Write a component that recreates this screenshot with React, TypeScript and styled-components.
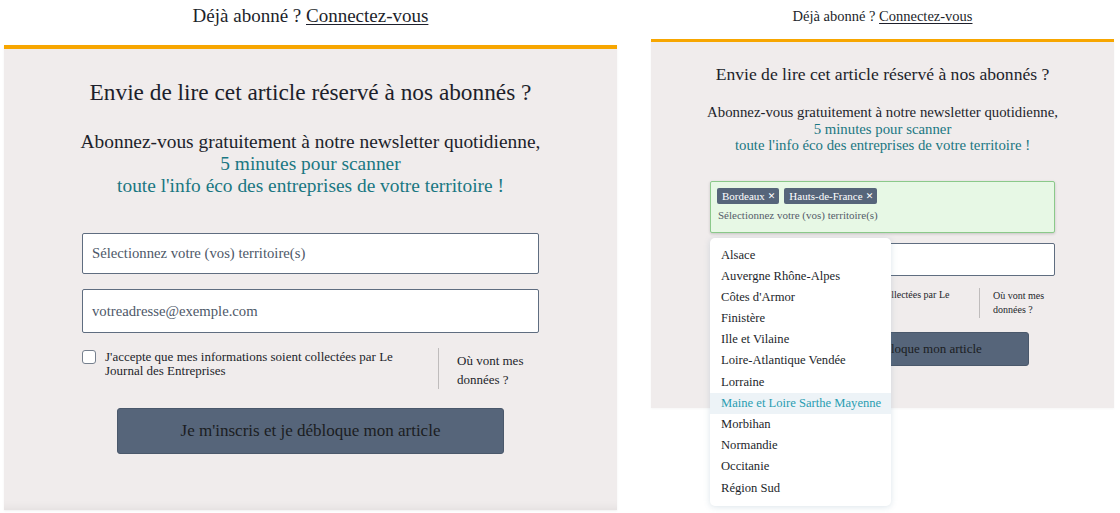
import React from "react";
import styled, { createGlobalStyle, css } from "styled-components";

const Global = createGlobalStyle`
  html, body { margin: 0; padding: 0; background: #ffffff; }
  body { font-family: "Liberation Serif", "DejaVu Serif", serif; color: #1d1f2b; }
  * { box-sizing: border-box; }
`;

type Size = "lg" | "sm";

const S = {
  lg: {
    loginFont: 19, loginH: 45, border: 4, panelW: 613, panelML: 4,
    padTop: 29, padBottom: 56, headFont: 23.3, headLH: 28, headGap: 25,
    subFont: 19.4, subLH: 22, formGap: 36, formW: 457,
    in1H: 41, in2H: 44, inGap: 15, inFont: 14.7, inPad: 9,
    consentGap: 15, consentH: 41, consentFont: 13, consentLH: 14, boxSize: 14,
    textW: 300, divPad: 18, rightW: 82, rightLH: 19,
    btnGap: 19, btnW: 387, btnH: 46, btnFont: 17,
  },
  sm: {
    loginFont: 14.5, loginH: 39, border: 3, panelW: 463, panelML: 0,
    padTop: 22, padBottom: 42, headFont: 17.6, headLH: 21, headGap: 19,
    subFont: 14.8, subLH: 16.5, formGap: 27, formW: 345,
    in1H: 52, in2H: 33, inGap: 10, inFont: 11, inPad: 7,
    consentGap: 12, consentH: 30, consentFont: 10, consentLH: 11, boxSize: 11,
    textW: 230, divPad: 13, rightW: 62, rightLH: 14,
    btnGap: 14, btnW: 293, btnH: 34, btnFont: 13,
  },
};

const Page = styled.div`
  display: grid;
  grid-template-columns: 620px 463px;
  column-gap: 31px;
  width: 1120px;
  height: 513px;
  overflow: hidden;
`;

const Column = styled.div<{ $s: Size }>`
  display: flex;
  flex-direction: column;
  align-items: flex-start;
`;

const Login = styled.div<{ $s: Size }>`
  ${({ $s }) => css`
    width: ${S[$s].panelW + S[$s].panelML}px;
    padding-left: ${S[$s].panelML}px;
    height: ${S[$s].loginH}px;
    font-size: ${S[$s].loginFont}px;
  `}
  display: flex;
  align-items: flex-start;
  justify-content: center;
  padding-top: ${({ $s }) => ($s === "lg" ? 5 : 8)}px;
  color: #1d1f2b;
  a { color: #1d1f2b; text-decoration: underline; text-underline-offset: 2px; }
`;

const Panel = styled.section<{ $s: Size }>`
  ${({ $s }) => css`
    width: ${S[$s].panelW}px;
    margin-left: ${S[$s].panelML}px;
    border-top: ${S[$s].border}px solid #f7a600;
    padding: ${S[$s].padTop}px 0 ${S[$s].padBottom}px;
  `}
  background: #f0ecec;
  box-shadow: ${({ $s }) =>
    $s === "lg" ? "inset 0 -10px 10px -8px rgba(0,0,0,0.06), 0 1px 2px rgba(0,0,0,0.06)" : "0 1px 2px rgba(0,0,0,0.04)"};
  display: flex;
  flex-direction: column;
  align-items: center;
`;

const Heading = styled.h2<{ $s: Size }>`
  margin: 0;
  font-weight: 400;
  text-align: center;
  white-space: nowrap;
  ${({ $s }) => css`
    font-size: ${S[$s].headFont}px;
    line-height: ${S[$s].headLH}px;
  `}
`;

const Sub = styled.p<{ $s: Size }>`
  margin: ${({ $s }) => S[$s].headGap}px 0 0;
  text-align: center;
  white-space: nowrap;
  ${({ $s }) => css`
    font-size: ${S[$s].subFont}px;
    line-height: ${S[$s].subLH}px;
  `}
`;

const Teal = styled.span`
  color: #1a7782;
`;

const Form = styled.div<{ $s: Size }>`
  position: relative;
  display: flex;
  flex-direction: column;
  align-items: center;
  ${({ $s }) => css`
    width: ${S[$s].formW}px;
    margin-top: ${S[$s].formGap}px;
  `}
`;

const Field = styled.div<{ $s: Size; $h: number; $gap?: number }>`
  width: 100%;
  height: ${({ $h }) => $h}px;
  margin-top: ${({ $gap }) => $gap ?? 0}px;
  background: #ffffff;
  border: 1px solid #5f6d80;
  border-radius: 2px;
  display: flex;
  align-items: center;
  padding: 0 ${({ $s }) => S[$s].inPad}px;
  font-size: ${({ $s }) => S[$s].inFont}px;
  color: #4d5868;
`;

const SelectWrap = styled.div`
  position: relative;
  width: 100%;
`;

const MultiSelect = styled.div<{ $s: Size }>`
  width: 100%;
  height: ${({ $s }) => S[$s].in1H}px;
  background: #e7f8e5;
  border: 1px solid #8bc98a;
  border-radius: 2px;
  box-shadow: 0 1px 3px rgba(0, 0, 0, 0.18);
  padding: 6px 6px 0;
  display: flex;
  flex-direction: column;
  gap: 5px;
`;

const Tags = styled.div`
  display: flex;
  gap: 5px;
`;

const Tag = styled.span`
  background: #56657a;
  color: #ffffff;
  font-size: 11px;
  line-height: 16px;
  height: 16px;
  padding: 0 4px 0 5px;
  border-radius: 2px;
  display: inline-flex;
  align-items: center;
  gap: 3px;
  b { font-family: "DejaVu Sans", sans-serif; font-size: 9px; font-weight: 700; }
`;

const Placeholder = styled.span`
  font-size: 11px;
  color: #555d6a;
  padding-left: 1px;
`;

const Menu = styled.ul`
  position: absolute;
  left: 0;
  top: 57px;
  width: 181px;
  margin: 0;
  padding: 7px 0;
  list-style: none;
  background: #ffffff;
  border-radius: 5px;
  box-shadow: 0 1px 6px rgba(90, 130, 160, 0.22);
  z-index: 2;
`;

const MenuItem = styled.li<{ $active?: boolean }>`
  height: 21.2px;
  line-height: 21.2px;
  padding-left: 11px;
  font-size: 12.6px;
  white-space: nowrap;
  color: ${({ $active }) => ($active ? "#2a9db2" : "#1d1f2b")};
  background: ${({ $active }) => ($active ? "#edf3f7" : "transparent")};
`;

const Consent = styled.div<{ $s: Size }>`
  width: 100%;
  display: flex;
  align-items: stretch;
  ${({ $s }) => css`
    margin-top: ${S[$s].consentGap}px;
    min-height: ${S[$s].consentH}px;
    font-size: ${S[$s].consentFont}px;
  `}
`;

const Check = styled.span<{ $s: Size }>`
  flex: none;
  ${({ $s }) => css`
    width: ${S[$s].boxSize}px;
    height: ${S[$s].boxSize}px;
    margin-top: 2px;
    margin-right: ${$s === "lg" ? 9 : 7}px;
  `}
  border: 1.5px solid #76808e;
  border-radius: 3px;
  background: #ffffff;
`;

const ConsentText = styled.span<{ $s: Size }>`
  ${({ $s }) => css`
    width: ${S[$s].textW}px;
    line-height: ${S[$s].consentLH}px;
    padding-top: ${$s === "lg" ? 2 : 1}px;
  `}
  color: #1d1f2b;
`;

const Divider = styled.span<{ $s: Size }>`
  flex: none;
  width: 1px;
  background: #bfbcbc;
  margin-left: auto;
  margin-right: ${({ $s }) => S[$s].divPad}px;
`;

const Where = styled.span<{ $s: Size }>`
  flex: none;
  ${({ $s }) => css`
    width: ${S[$s].rightW}px;
    line-height: ${S[$s].rightLH}px;
    padding-top: ${$s === "lg" ? 3 : 1}px;
  `}
  color: #1d1f2b;
`;

const Button = styled.button<{ $s: Size }>`
  ${({ $s }) => css`
    width: ${S[$s].btnW}px;
    height: ${S[$s].btnH}px;
    margin-top: ${S[$s].btnGap}px;
    font-size: ${S[$s].btnFont}px;
  `}
  background: #56657a;
  border: 1px solid #4a586b;
  border-radius: 3px;
  color: #1b1d22;
  font-family: inherit;
  cursor: pointer;
`;

const regions = [
  "Alsace",
  "Auvergne Rhône-Alpes",
  "Côtes d'Armor",
  "Finistère",
  "Ille et Vilaine",
  "Loire-Atlantique Vendée",
  "Lorraine",
  "Maine et Loire Sarthe Mayenne",
  "Morbihan",
  "Normandie",
  "Occitanie",
  "Région Sud",
];

function Paywall({ s, open }: { s: Size; open?: boolean }) {
  return (
    <Column $s={s}>
      <Login $s={s}>
        <span>
          Déjà abonné ? <a href="#">Connectez-vous</a>
        </span>
      </Login>
      <Panel $s={s}>
        <Heading $s={s}>Envie de lire cet article réservé à nos abonnés ?</Heading>
        <Sub $s={s}>
          Abonnez-vous gratuitement à notre newsletter quotidienne,
          <br />
          <Teal>5 minutes pour scanner</Teal>
          <br />
          <Teal>toute l'info éco des entreprises de votre territoire !</Teal>
        </Sub>
        <Form $s={s}>
          {open ? (
            <SelectWrap>
              <MultiSelect $s={s}>
                <Tags>
                  <Tag>
                    Bordeaux <b>✕</b>
                  </Tag>
                  <Tag>
                    Hauts-de-France <b>✕</b>
                  </Tag>
                </Tags>
                <Placeholder>Sélectionnez votre (vos) territoire(s)</Placeholder>
              </MultiSelect>
              <Menu>
                {regions.map((r) => (
                  <MenuItem key={r} $active={r.startsWith("Maine")}>
                    {r}
                  </MenuItem>
                ))}
              </Menu>
            </SelectWrap>
          ) : (
            <Field $s={s} $h={S[s].in1H}>
              Sélectionnez votre (vos) territoire(s)
            </Field>
          )}
          <Field $s={s} $h={S[s].in2H} $gap={S[s].inGap}>
            votreadresse@exemple.com
          </Field>
          <Consent $s={s}>
            <Check $s={s} />
            <ConsentText $s={s}>
              J'accepte que mes informations soient collectées par Le Journal des Entreprises
            </ConsentText>
            <Divider $s={s} />
            <Where $s={s}>Où vont mes données ?</Where>
          </Consent>
          <Button $s={s}>Je m'inscris et je débloque mon article</Button>
        </Form>
      </Panel>
    </Column>
  );
}

export default function App() {
  return (
    <>
      <Global />
      <Page>
        <Paywall s="lg" />
        <Paywall s="sm" open />
      </Page>
    </>
  );
}
